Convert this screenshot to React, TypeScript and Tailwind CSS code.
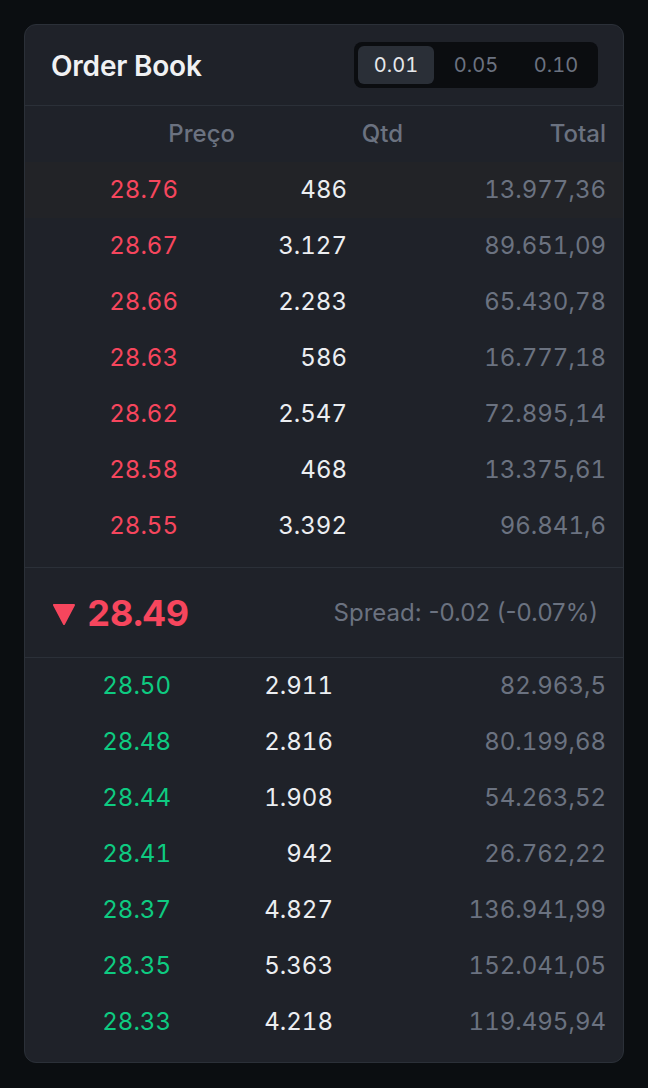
import React from "react";

type Row = { price: string; qty: string; total: string };

const asks: Row[] = [
  { price: "28.76", qty: "486", total: "13.977,36" },
  { price: "28.67", qty: "3.127", total: "89.651,09" },
  { price: "28.66", qty: "2.283", total: "65.430,78" },
  { price: "28.63", qty: "586", total: "16.777,18" },
  { price: "28.62", qty: "2.547", total: "72.895,14" },
  { price: "28.58", qty: "468", total: "13.375,61" },
  { price: "28.55", qty: "3.392", total: "96.841,6" },
];

const bids: Row[] = [
  { price: "28.50", qty: "2.911", total: "82.963,5" },
  { price: "28.48", qty: "2.816", total: "80.199,68" },
  { price: "28.44", qty: "1.908", total: "54.263,52" },
  { price: "28.41", qty: "942", total: "26.762,22" },
  { price: "28.37", qty: "4.827", total: "136.941,99" },
  { price: "28.35", qty: "5.363", total: "152.041,05" },
  { price: "28.33", qty: "4.218", total: "119.495,94" },
];

const font = { fontFamily: "Inter, 'Noto Sans', sans-serif" };

export default function App() {
  return (
    <div
      className="min-h-[1088px] w-full bg-[#0b0e11] pt-6 px-6 pb-6"
      style={font}
    >
      <div className="w-[600px] rounded-xl border border-[#2b3038] bg-[#1f2229] overflow-hidden">
        {/* header */}
        <div className="flex h-[81px] items-center justify-between border-b border-[#2b3038] pl-[26px] pr-[25px]">
          <h2 className="mt-[2px] text-[28px] font-semibold text-[#f0f1f3] tracking-[-0.2px]">
            Order Book
          </h2>
          <div className="flex gap-1 rounded-lg bg-[#0b0d10] p-1">
            {["0.01", "0.05", "0.10"].map((v, i) => (
              <button
                key={v}
                className={
                  i === 0
                    ? "flex h-[38px] w-[76px] items-center justify-center rounded-md bg-[#2a2f37] text-[20px] tabular-nums text-[#e6e8eb]"
                    : "flex h-[38px] w-[76px] items-center justify-center rounded-md text-[20px] tabular-nums text-[#6b7280]"
                }
              >
                {v}
              </button>
            ))}
          </div>
        </div>

        {/* asks */}
        <div className="pb-[13px]">
          <div className="grid h-[56px] grid-cols-[185px_168px_1fr] items-center pl-[25px] pr-[17px] text-right text-[24px] font-medium text-[#6b7280]">
            <span>Preço</span>
            <span>Qtd</span>
            <span>Total</span>
          </div>
          {asks.map((r, i) => (
            <div
              key={r.price}
              className={
                i === 0
                  ? "grid h-[56px] grid-cols-[128px_169px_1fr] items-center bg-[#222327] pl-[25px] pr-[17px] text-right text-[24px] tabular-nums"
                  : "grid h-[56px] grid-cols-[128px_169px_1fr] items-center pl-[25px] pr-[17px] text-right text-[24px] tabular-nums"
              }
            >
              <span className="text-[#f6465d]">{r.price}</span>
              <span className="text-[#eceef1]">{r.qty}</span>
              <span className="text-[#6b7280]">{r.total}</span>
            </div>
          ))}
        </div>

        {/* last price */}
        <div className="flex h-[91px] items-center justify-between border-y border-[#2b3038] pl-[28px] pr-[25px]">
          <div className="flex items-center gap-[12px] text-[#f6465d]">
            <svg width="22" height="24" viewBox="0 0 22 24" className="mt-[2px]">
              <path d="M1 3 H21 L11 22 Z" fill="#f6465d" strokeLinejoin="round" stroke="#f6465d" strokeWidth="2" />
            </svg>
            <span className="text-[36px] font-bold tabular-nums tracking-[-0.2px]">28.49</span>
          </div>
          <span className="text-[24px] text-[#6b7280]">Spread: -0.02 (-0.07%)</span>
        </div>

        {/* bids */}
        <div className="pb-[12px]">
          {bids.map((r) => (
            <div
              key={r.price}
              className="grid h-[56px] grid-cols-[121px_162px_1fr] items-center pl-[25px] pr-[17px] text-right text-[24px] tabular-nums"
            >
              <span className="text-[#0ecb81]">{r.price}</span>
              <span className="text-[#eceef1]">{r.qty}</span>
              <span className="text-[#6b7280]">{r.total}</span>
            </div>
          ))}
        </div>
      </div>
    </div>
  );
}
